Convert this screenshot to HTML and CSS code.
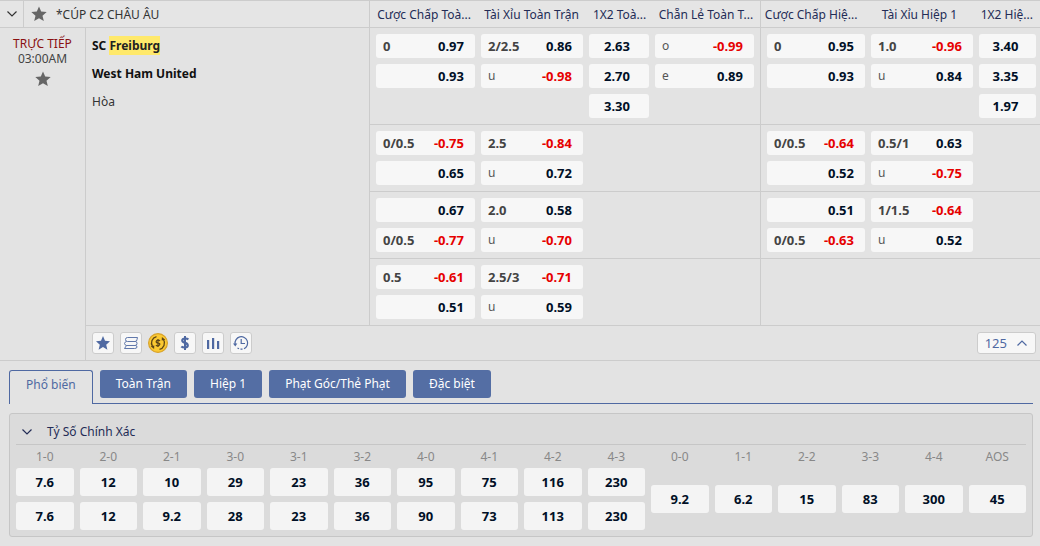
FILE: index.html
```html
<!DOCTYPE html>
<html lang="vi">
<head>
<meta charset="utf-8">
<meta name="viewport" content="width=device-width, initial-scale=1">
<title>Cúp C2 Châu Âu</title>
<link rel="stylesheet" href="styles.css">
</head>
<body>
<svg class="defs" aria-hidden="true">
  <symbol id="star" viewBox="0 0 16 16"><path d="M8 .6l2.200 5 5.500.5-4.200 3.600 1.300 5.400L8 12.300l-4.800 2.800 1.300-5.400L.3 6.100l5.500-.5z" fill="currentColor"/></symbol>
  <symbol id="down" viewBox="0 0 12 12"><path d="M1.500 3.500L6 8l4.500-4.500" fill="none" stroke="currentColor" stroke-width="1.200"/></symbol>
</svg>

<header class="league">
  <button class="league-toggle" type="button" aria-label="Thu gọn"><svg class="chevron"><use href="#down"/></svg></button>
  <div class="league-name"><button class="plain" type="button" aria-label="Yêu thích giải"><svg class="star"><use href="#star"/></svg></button><span>*CÚP C2 CHÂU ÂU</span></div>
  <div class="full heads"><span>Cược Chấp Toà...</span><span>Tài Xỉu Toàn Trận</span><span>1X2 Toà...</span><span>Chẵn Lẻ Toàn T...</span></div>
  <div class="half heads"><span>Cược Chấp Hiệ...</span><span>Tài Xỉu Hiệp 1</span><span>1X2 Hiệ...</span></div>
</header>

<section class="match">
  <div class="time">
    <span class="live">TRỰC TIẾP</span>
    <span>03:00AM</span>
    <button class="plain" type="button" aria-label="Yêu thích trận"><svg class="star"><use href="#star"/></svg></button>
  </div>
  <div class="match-main">
    <div class="match-body">
      <div class="teams">
        <strong>SC <mark>Freiburg</mark></strong>
        <strong>West Ham United</strong>
        <span>Hòa</span>
      </div>
      <div class="lines">
        <div class="line">
          <div class="full">
            <div class="col"><button class="odd"><b>0</b><em>0.97</em></button><button class="odd"><em>0.93</em></button></div>
            <div class="col"><button class="odd"><b>2/2.5</b><em>0.86</em></button><button class="odd"><i>u</i><em class="neg">-0.98</em></button></div>
            <div class="col"><button class="odd single"><em>2.63</em></button><button class="odd single"><em>2.70</em></button><button class="odd single"><em>3.30</em></button></div>
            <div class="col"><button class="odd"><i>o</i><em class="neg">-0.99</em></button><button class="odd"><i>e</i><em>0.89</em></button></div>
          </div>
          <div class="half">
            <div class="col"><button class="odd"><b>0</b><em>0.95</em></button><button class="odd"><em>0.93</em></button></div>
            <div class="col"><button class="odd"><b>1.0</b><em class="neg">-0.96</em></button><button class="odd"><i>u</i><em>0.84</em></button></div>
            <div class="col"><button class="odd single"><em>3.40</em></button><button class="odd single"><em>3.35</em></button><button class="odd single"><em>1.97</em></button></div>
          </div>
        </div>
        <div class="line">
          <div class="full">
            <div class="col"><button class="odd"><b>0/0.5</b><em class="neg">-0.75</em></button><button class="odd"><em>0.65</em></button></div>
            <div class="col"><button class="odd"><b>2.5</b><em class="neg">-0.84</em></button><button class="odd"><i>u</i><em>0.72</em></button></div>
          </div>
          <div class="half">
            <div class="col"><button class="odd"><b>0/0.5</b><em class="neg">-0.64</em></button><button class="odd"><em>0.52</em></button></div>
            <div class="col"><button class="odd"><b>0.5/1</b><em>0.63</em></button><button class="odd"><i>u</i><em class="neg">-0.75</em></button></div>
          </div>
        </div>
        <div class="line">
          <div class="full">
            <div class="col"><button class="odd"><em>0.67</em></button><button class="odd"><b>0/0.5</b><em class="neg">-0.77</em></button></div>
            <div class="col"><button class="odd"><b>2.0</b><em>0.58</em></button><button class="odd"><i>u</i><em class="neg">-0.70</em></button></div>
          </div>
          <div class="half">
            <div class="col"><button class="odd"><em>0.51</em></button><button class="odd"><b>0/0.5</b><em class="neg">-0.63</em></button></div>
            <div class="col"><button class="odd"><b>1/1.5</b><em class="neg">-0.64</em></button><button class="odd"><i>u</i><em>0.52</em></button></div>
          </div>
        </div>
        <div class="line">
          <div class="full">
            <div class="col"><button class="odd"><b>0.5</b><em class="neg">-0.61</em></button><button class="odd"><em>0.51</em></button></div>
            <div class="col"><button class="odd"><b>2.5/3</b><em class="neg">-0.71</em></button><button class="odd"><i>u</i><em>0.59</em></button></div>
          </div>
          <div class="half"></div>
        </div>
      </div>
    </div>
    <div class="tools">
      <button class="tool" type="button" aria-label="Yêu thích"><svg viewBox="0 0 20 20"><path d="M10 3l2 4.800 5 .5-3.800 3.400 1.200 5L10 14l-4.400 2.700 1.200-5L3 8.300l5-.5z" fill="currentColor"/></svg></button>
      <button class="tool" type="button" aria-label="Cược xâu"><svg viewBox="0 0 20 20" fill="none" stroke="currentColor" stroke-width=".9"><path d="M16.500 4.500H6.500Q4.500 4.500 4.500 6.500T6.500 8.500H14Q16 8.500 16 6.500L16.500 4.500M5.500 8.500Q3.500 9 3.500 10.500T5.500 12.500H14Q16 12.500 16 10.500T14.500 8.500M5.500 12.500L3.500 15.500H13.500Q16 15.500 16 14T14.500 12.500"/></svg></button>
      <button class="coin" type="button" aria-label="Rút tiền"><svg viewBox="0 0 20 20" fill="none" stroke="#5c4416" stroke-width="1.300"><circle cx="10" cy="10" r="9.400" fill="#fbc932" stroke="#d7a22c" stroke-width="1.200"/><path d="M8.500 3.700A6.500 6.500 0 0 0 4.500 13.500M11.500 16.300A6.500 6.500 0 0 0 15.500 6.500"/><path d="M2.700 13.200l3.600-.8-.2 3.600zM17.300 6.800l-3.600.8.200-3.600z" fill="#5c4416" stroke="none"/><path d="M12 8Q11.500 7.200 10 7.200T8.200 8.500 10 10t1.800 1.400T10 12.800 8 12M10 6v8" stroke-width="1.200"/></svg></button>
      <button class="tool" type="button" aria-label="Tiền"><svg viewBox="0 0 20 20" fill="none" stroke="currentColor"><path d="M13.300 6.500Q12.500 5.500 10.200 5.500C6.300 5.500 6.300 9 10 9.900S13.700 14.500 10 14.500Q7.400 14.500 6.300 13.500" stroke-width="2.200"/><path d="M10 3v14" stroke-width="2"/></svg></button>
      <button class="tool" type="button" aria-label="Thống kê"><svg viewBox="0 0 20 20" fill="currentColor"><path d="M4 7h2.200v9H4zM9 5h2.200v11H9zM14 8h2.200v8H14z"/></svg></button>
      <button class="tool" type="button" aria-label="Lịch sử"><svg viewBox="0 0 20 20" fill="none" stroke="currentColor" stroke-width="1.200"><path d="M4.100 11A6.300 6.300 0 1 1 13 15.700M11.500 16.200h-2M8 15.800l-1.500-.8M10.200 6v4.500H14"/><path d="M2 10.500l2.300 3 2-3z" fill="currentColor" stroke="none"/></svg></button>
      <button class="more" type="button">125<svg class="chevron up"><use href="#down"/></svg></button>
    </div>
  </div>
</section>

<main class="markets">
  <nav class="tabs">
    <button class="tab active" type="button">Phổ biến</button>
    <button class="tab" type="button">Toàn Trận</button>
    <button class="tab" type="button">Hiệp 1</button>
    <button class="tab" type="button">Phạt Góc/Thẻ Phạt</button>
    <button class="tab" type="button">Đặc biệt</button>
  </nav>
  <section class="panel">
    <h2><button class="plain" type="button"><svg class="chevron"><use href="#down"/></svg>Tỷ Số Chính Xác</button></h2>
    <div class="scores">
      <div class="score"><span>1-0</span><div><button>7.6</button><button>7.6</button></div></div>
      <div class="score"><span>2-0</span><div><button>12</button><button>12</button></div></div>
      <div class="score"><span>2-1</span><div><button>10</button><button>9.2</button></div></div>
      <div class="score"><span>3-0</span><div><button>29</button><button>28</button></div></div>
      <div class="score"><span>3-1</span><div><button>23</button><button>23</button></div></div>
      <div class="score"><span>3-2</span><div><button>36</button><button>36</button></div></div>
      <div class="score"><span>4-0</span><div><button>95</button><button>90</button></div></div>
      <div class="score"><span>4-1</span><div><button>75</button><button>73</button></div></div>
      <div class="score"><span>4-2</span><div><button>116</button><button>113</button></div></div>
      <div class="score"><span>4-3</span><div><button>230</button><button>230</button></div></div>
      <div class="score"><span>0-0</span><div><button>9.2</button></div></div>
      <div class="score"><span>1-1</span><div><button>6.2</button></div></div>
      <div class="score"><span>2-2</span><div><button>15</button></div></div>
      <div class="score"><span>3-3</span><div><button>83</button></div></div>
      <div class="score"><span>4-4</span><div><button>300</button></div></div>
      <div class="score"><span>AOS</span><div><button>45</button></div></div>
    </div>
  </section>
</main>
</body>
</html>
```
FILE: styles.css
```css
* { box-sizing: border-box; }
body {
  margin: 0;
  background: #e3e3e3;
  color: #333;
  font: 13px/16px "Noto Sans", "Open Sans", sans-serif;
}
button {
  margin: 0;
  padding: 0;
  border: 0;
  background: none;
  color: inherit;
  font: inherit;
  cursor: pointer;
}
svg { display: block; }
.defs { position: absolute; width: 0; height: 0; }
.star { width: 16px; height: 16px; color: #666; }
.chevron { width: 12px; height: 12px; }
.up { transform: rotate(180deg); }

.league {
  display: grid;
  grid-template-columns: 24px 345px minmax(0, 391fr) minmax(0, 280fr);
  height: 28px;
  border-top: 1px solid #ccc;
  border-bottom: 1px solid #ccc;
  background: #e5e5e5;
  font-size: 12px;
}
.league-toggle {
  display: grid;
  place-items: center;
  border-right: 1px solid #ccc;
}
.league-name {
  display: flex;
  align-items: center;
  gap: 9px;
  padding-left: 7px;
}
.league-name span, .heads span { padding-top: 2px; }
.full, .half {
  display: grid;
  gap: 6px;
  border-left: 1px solid #ccc;
}
.full {
  grid-template-columns: minmax(0, 99fr) minmax(0, 102fr) minmax(0, 60fr) minmax(0, 99fr);
  padding: 6px;
}
.half {
  grid-template-columns: minmax(0, 98fr) minmax(0, 102fr) minmax(0, 57fr);
  padding: 6px 4px 6px 6px;
}
.heads {
  padding: 0 4px;
  align-items: center;
  color: #232c56;
  text-align: center;
  white-space: nowrap;
}
.half.heads { padding: 0 4px 0 0; }
.heads span { display: flex; justify-content: center; }

.match {
  display: grid;
  grid-template-columns: 85px minmax(0, 1fr);
  border-bottom: 1px solid #ccc;
}
.time {
  display: flex;
  flex-direction: column;
  align-items: center;
  padding-top: 8px;
  line-height: 15px;
  font-size: 12px;
  color: #444;
}
.time .star { margin-top: 5px; }
.live { color: #8a1111; }
.match-main { border-left: 1px solid #ccc; }
.match-body {
  display: grid;
  grid-template-columns: 283px minmax(0, 1fr);
}
.teams {
  display: flex;
  flex-direction: column;
  align-items: flex-start;
  gap: 10px;
  padding: 9px 6px;
  border-bottom: 1px solid #ccc;
  line-height: 18px;
  font-size: 12px;
}
.teams strong { color: #111; }
mark { background: #ffe96b; color: #222; padding: 1px 0; }
.line {
  display: grid;
  grid-template-columns: minmax(0, 391fr) minmax(0, 280fr);
}
.line > div { border-bottom: 1px solid #ccc; }
.col {
  display: flex;
  flex-direction: column;
  gap: 6px;
}
.odd {
  display: flex;
  align-items: center;
  height: 24px;
  padding: 0 11px 0 7px;
  border-radius: 3px;
  background: #f7f7f7;
  color: #444;
}
.odd i { font-style: normal; font-size: 12px; color: #555; }
.odd em { margin-left: auto; font-style: normal; font-weight: 700; color: #000f26; }
.odd .neg { color: #e60000; }
.odd.single { padding: 0 4px 0 0; }
.odd.single em { margin: 0 auto; }

.tools {
  display: flex;
  align-items: center;
  gap: 6px;
  padding: 6px 4px 6px 6px;
  color: #4f69a2;
}
.tool, .more {
  height: 22px;
  border: 1px solid #ccc;
  border-radius: 3px;
  background: #f7f7f7;
}
.tool { width: 22px; }
.coin { width: 20px; height: 20px; }
.more {
  display: flex;
  align-items: center;
  gap: 9px;
  margin-left: auto;
  padding: 0 7px;
}

.markets { padding: 9px 7px 9px 9px; }
.tabs {
  display: flex;
  align-items: flex-start;
  gap: 7px;
  height: 34px;
  border-bottom: 1px solid #4f69a2;
}
.tab {
  height: 28px;
  padding: 0 16px;
  border-radius: 3px;
  background: #546ea4;
  color: #fff;
  font-size: 12px;
  white-space: nowrap;
}
.tab.active {
  height: 34px;
  padding-bottom: 6px;
  border: 1px solid #4f69a2;
  border-bottom: 0;
  border-radius: 3px 3px 0 0;
  background: #e3e3e3;
  color: #4f69a2;
}
.panel {
  margin-top: 9px;
  padding: 6px;
  border: 1px solid #c6c6c6;
  border-radius: 3px;
  background: #dbdbdb;
}
h2 {
  margin: 0;
  border-bottom: 1px solid #c6c6c6;
  font-size: 12px;
  font-weight: 400;
  color: #232c56;
}
h2 button {
  display: flex;
  align-items: center;
  gap: 14px;
  height: 24px;
  padding-left: 5px;
}
.scores {
  display: grid;
  grid-template-columns: repeat(16, minmax(0, 1fr));
  gap: 6px;
}
.score { display: flex; flex-direction: column; text-align: center; }
.score span { padding: 4px 0 3px; font-size: 12px; color: #888; }
.score div {
  display: flex;
  flex: 1;
  flex-direction: column;
  justify-content: center;
  gap: 6px;
}
.score button {
  height: 28px;
  border-radius: 3px;
  background: #f4f4f4;
  color: #000f26;
  font-weight: 700;
}
```
